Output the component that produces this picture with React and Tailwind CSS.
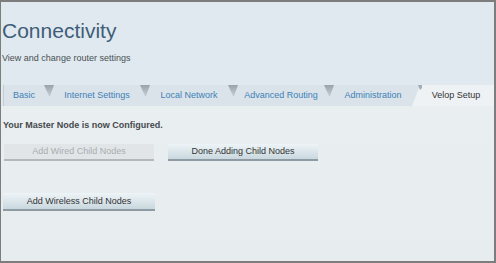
const tabs = [
  { label: "Basic", w: "w-[40px]" },
  { label: "Internet Settings", w: "w-[86px]" },
  { label: "Local Network", w: "w-[78px]" },
  { label: "Advanced Routing", w: "w-[86px]" },
  { label: "Administration", w: "w-[78px]" },
];

function Notch() {
  return (
    <svg width="10" height="21" viewBox="0 0 10 21" className="shrink-0">
      <defs>
        <linearGradient id="ng" x1="0" y1="0" x2="0" y2="1">
          <stop offset="0" stopColor="#9aa3a9" />
          <stop offset="1" stopColor="#c5cdd2" />
        </linearGradient>
      </defs>
      <rect width="10" height="21" fill="#d9e3e9" />
      <polygon points="0,0 10,0 6,11 5,11" fill="url(#ng)" />
    </svg>
  );
}

function Button({ children, disabled, className = "" }) {
  return (
    <button
      className={
        "block h-[17px] whitespace-nowrap border-b-2 text-[9px] leading-none " +
        (disabled
          ? "border-[#b3b8bb] bg-[#e1e5e7] text-[#a9adb0]"
          : "border-[#8e9ba2] bg-gradient-to-b from-[#eef4f7] to-[#c9d8df] text-[#333]") +
        " " +
        className
      }
    >
      {children}
    </button>
  );
}

export default function App() {
  return (
    <div
      className="flex h-[263px] w-[496px] flex-col border-y-2 border-l border-r-2 border-[#7d7d7d] bg-[#e9eef1]"
      style={{ fontFamily: '"Liberation Sans", Arial, sans-serif' }}
    >
      <div className="bg-[#dfe9ef] pl-[1px]">
        <h1 className="pt-[16px] text-[21px] leading-[26px] text-[#3f5d77]">Connectivity</h1>
        <p className="mt-[8px] text-[9px] leading-[12px] text-[#4a4f53]">View and change router settings</p>

        <div className="mt-[21px] flex h-[21px] items-stretch pl-[1px]">
          <div className="w-[1px] bg-[#c3ccd1]" />
          {tabs.map((t, i) => (
            <div key={t.label} className="flex items-stretch">
              <div
                className={
                  t.w +
                  " flex items-center justify-center whitespace-nowrap bg-[#d9e3e9] text-[9px] text-[#3f7fb8]"
                }
              >
                {t.label}
              </div>
              {i < tabs.length - 1 && <Notch />}
            </div>
          ))}
          <svg width="10" height="21" viewBox="0 0 10 21" className="shrink-0">
            <rect width="10" height="21" fill="#eef2f4" />
            <polygon points="0,0 8,0 0,21" fill="#d9e3e9" />
            <polygon points="6,0 10,0 10,3 8,5" fill="#a3acb2" />
          </svg>
          <div className="flex flex-1 items-center justify-center whitespace-nowrap bg-[#eef2f4] pr-[4px] text-[9px] text-[#333]">
            Velop Setup
          </div>
        </div>
      </div>

      <div className="flex-1 bg-gradient-to-b from-[#e9eef1] to-[#e7ecef] pl-[2px]">
        <p className="mt-[14px] text-[9px] font-bold leading-[11px] text-[#45494c]">
          Your Master Node is now Configured.
        </p>
        <div className="mt-[13px] flex gap-[14px] pl-[1px]">
          <Button disabled className="w-[150px]">Add Wired Child Nodes</Button>
          <Button className="w-[150px]">Done Adding Child Nodes</Button>
        </div>
        <div className="mt-[32px] flex">
          <Button className="h-[18px] w-[152px]">Add Wireless Child Nodes</Button>
        </div>
      </div>
    </div>
  );
}
